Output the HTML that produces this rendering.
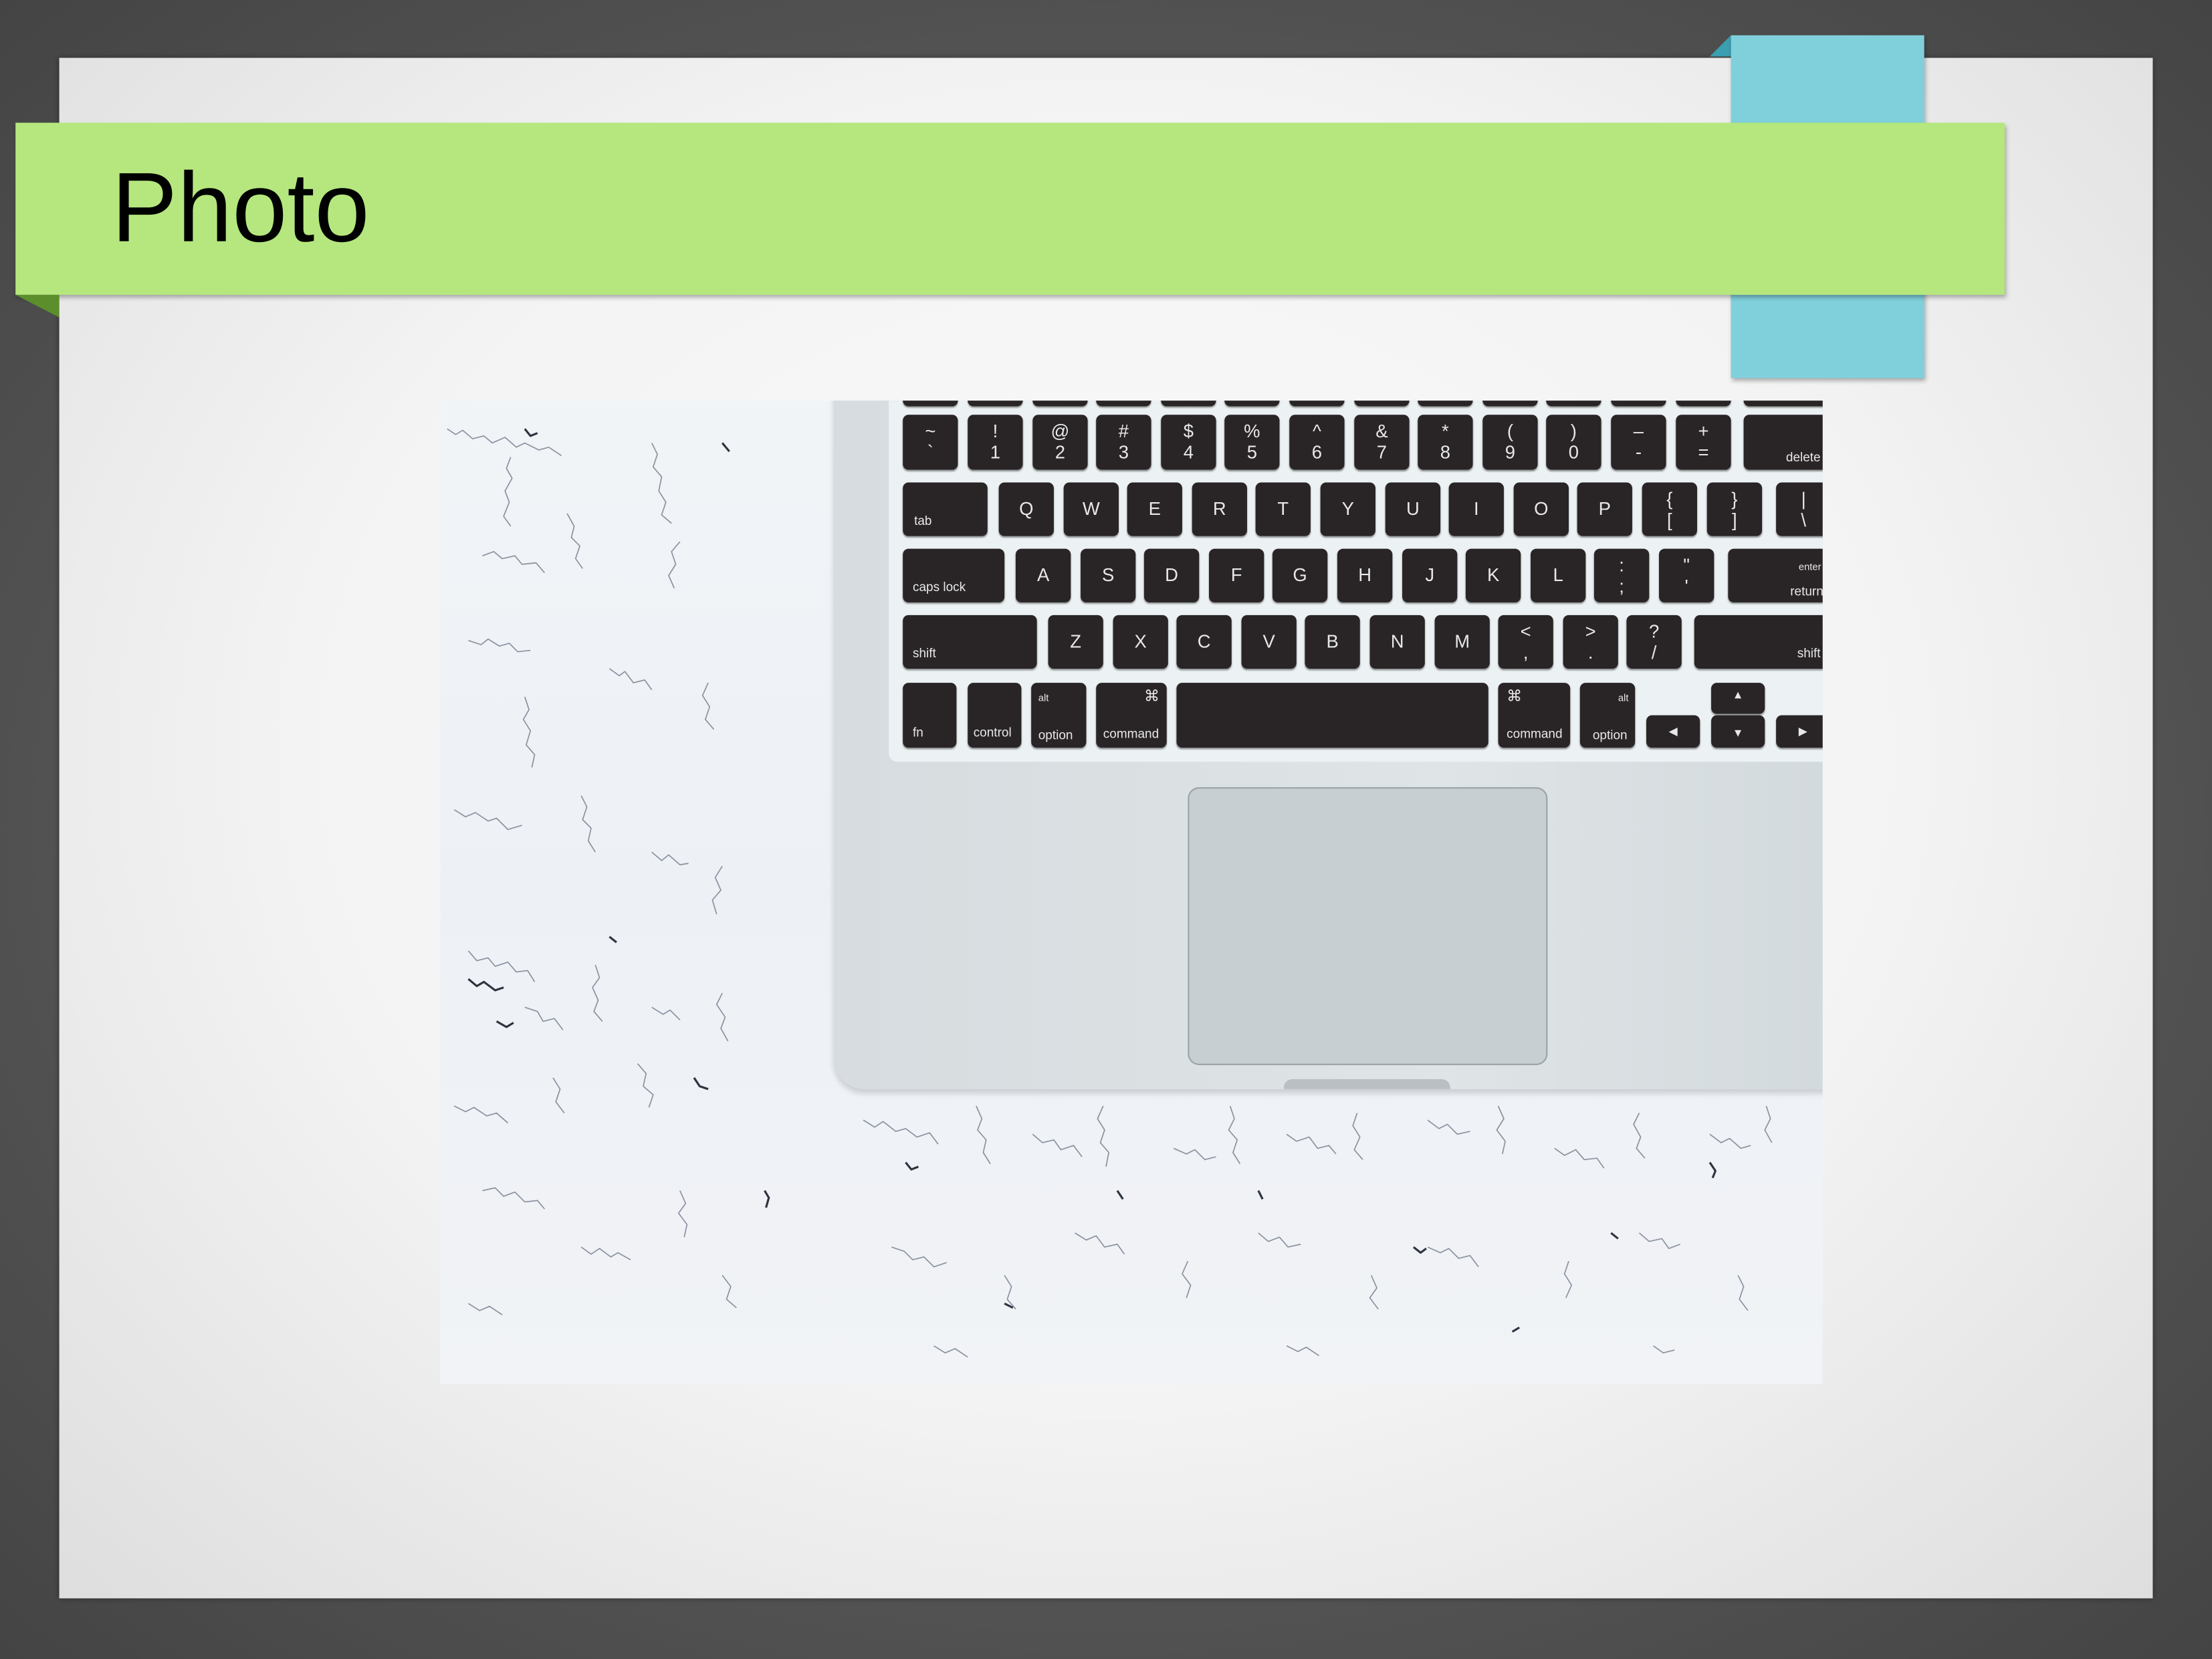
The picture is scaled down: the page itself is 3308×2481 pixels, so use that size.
<!DOCTYPE html>
<html><head><meta charset="utf-8">
<style>
html,body{margin:0;padding:0;width:3308px;height:2481px;overflow:hidden;background:#4a4a4a;}
#s{position:absolute;left:0;top:0;width:1568px;height:1176px;transform:scale(2.1097);transform-origin:0 0;
 background:radial-gradient(ellipse at 50% 50%,#6a6a6a 0%,#555 60%,#444 100%);font-family:"Liberation Sans",sans-serif;}
.slide{position:absolute;left:42px;top:41px;width:1484px;height:1092px;background:radial-gradient(ellipse at 50% 45%,#fbfbfb 0%,#f3f3f3 55%,#dedede 100%);box-shadow:0 0 4px rgba(0,0,0,.4);}
.blue{position:absolute;left:1227px;top:25px;width:137px;height:243px;background:#80d0dc;box-shadow:1px 2px 3px rgba(0,0,0,.3);}
.bfold{position:absolute;left:1212px;top:25px;width:0;height:0;border-right:15px solid #3a9fb0;border-top:15px solid transparent;}
.green{position:absolute;left:11px;top:87px;width:1410px;height:122px;background:#b5e77e;box-shadow:1px 2px 3px rgba(0,0,0,.3);}
.gfold{position:absolute;left:11px;top:209px;width:0;height:0;border-top:16px solid #5c8f2c;border-left:31px solid transparent;}
.title{position:absolute;left:79px;top:107px;font-size:70px;color:#000;line-height:80px;}
.photo{position:absolute;left:312px;top:284px;width:980px;height:697px;overflow:hidden;background:linear-gradient(180deg,#f1f4f7,#edf1f6 50%,#f1f3f6);}
.laptop{position:absolute;left:279px;top:-10px;width:720px;height:498px;background:linear-gradient(90deg,#d6dcdf,#dfe4e6 60%,#d2d9dc);border-radius:0 0 0 22px;box-shadow:0 3px 4px rgba(0,0,0,.15);}
.kbd{position:absolute;left:318px;top:0;width:680px;height:256px;background:#ecf1f3;border-radius:0 0 0 6px;}
.k{position:absolute;background:#292425;border-radius:4px;color:#e8e8e8;font-size:13px;text-align:center;box-shadow:0 1px 1px rgba(0,0,0,.4);}
.k.s{font-size:9px;text-align:left;}
.pad{position:absolute;left:530px;top:274px;width:253px;height:195px;background:#c8cfd2;border:1px solid #9aa2a5;border-radius:8px;}
.notch{position:absolute;left:598px;top:481px;width:118px;height:7px;background:#b9bfc2;border-radius:6px 6px 0 0;}
</style></head><body>
<div id="s">
<div class="slide"></div>
<div class="bfold"></div>
<div class="blue"></div>
<div class="green"></div>
<div class="gfold"></div>
<div class="title">Photo</div>
<div class="photo">
<svg width="980" height="697" style="position:absolute;left:0;top:0" fill="none" stroke="#8a92a0" stroke-width=".8" stroke-linejoin="round">
<path d="M5 20 l6 4 l5 -3 l7 6 l8 -2 l6 5 l9 -4 l8 7 l6 -3 l10 5 l7 -2 l9 6 M50 40 l-3 8 l4 7 l-5 9 l3 8 l-4 10 l5 7 M30 110 l8 -3 l6 5 l9 -2 l5 6 l10 -1 l6 7 M90 80 l5 9 l-2 8 l6 6 l-3 9 l5 7 M150 30 l4 8 l-3 9 l6 7 l-2 10 l5 8 l-3 9 l7 6 M170 100 l-6 7 l3 9 l-5 8 l4 9 M20 170 l9 3 l5 -4 l8 5 l7 -2 l6 6 l9 -1 M60 210 l3 9 l-4 7 l5 8 l-3 10 l6 7 l-2 9 M120 190 l7 5 l4 -3 l6 8 l8 -2 l5 7 M190 200 l-4 9 l5 8 l-3 9 l6 7 M10 290 l8 5 l7 -3 l9 6 l6 -2 l8 8 l10 -3 M100 280 l4 8 l-3 9 l6 6 l-2 9 l5 8 M150 320 l7 6 l5 -4 l8 7 l6 -1 M200 330 l-5 8 l4 9 l-6 7 l3 10 M20 390 l6 7 l8 -2 l5 6 l9 -3 l6 7 l8 -1 l5 8 M60 430 l9 3 l4 7 l8 -2 l6 8 M110 400 l3 9 l-5 7 l4 9 l-3 8 l6 7 M150 430 l8 5 l5 -3 l7 7 M200 420 l-4 8 l6 9 l-3 8 l5 9 M10 500 l8 4 l6 -3 l9 6 l7 -2 l8 7 M80 480 l5 8 l-3 9 l6 8 M140 470 l6 7 l-2 9 l7 6 l-3 9 M30 560 l9 -2 l6 6 l8 -3 l7 7 l9 -1 l5 6 M100 600 l7 5 l6 -4 l8 6 l5 -3 l9 5 M170 560 l4 9 l-5 7 l6 8 l-2 9 M20 640 l8 5 l7 -3 l9 6 M200 620 l6 8 l-3 9 l7 6"/>
<path d="M300 510 l8 5 l6 -4 l9 7 l7 -2 l8 6 l9 -3 l6 8 M380 500 l4 9 l-3 8 l6 7 l-2 9 l5 8 M420 520 l7 6 l8 -2 l5 7 l9 -3 l6 8 M470 500 l-4 9 l5 8 l-3 9 l6 7 l-2 10 M520 530 l9 4 l6 -3 l7 7 l8 -2 M560 500 l3 9 l-4 8 l6 7 l-3 9 l5 8 M600 520 l7 5 l9 -3 l6 8 l8 -2 l5 6 M650 505 l-3 9 l5 8 l-4 9 l6 7 M700 510 l8 6 l6 -3 l7 7 l9 -2 M750 500 l4 9 l-5 8 l6 8 l-2 9 M790 530 l7 5 l8 -4 l6 7 l9 -1 l5 7 M850 505 l-4 8 l5 9 l-3 8 l6 7 M900 520 l8 6 l6 -3 l8 7 l7 -2 M940 500 l3 9 l-4 8 l5 9 M320 600 l9 3 l6 6 l8 -2 l7 7 l9 -3 M400 620 l5 8 l-3 9 l6 7 M450 590 l8 5 l7 -3 l6 8 l9 -2 l5 7 M530 610 l-4 9 l6 8 l-3 9 M580 590 l7 6 l8 -3 l6 7 l9 -2 M660 620 l4 9 l-5 7 l6 8 M700 600 l9 4 l6 -3 l7 7 l8 -2 l6 8 M800 610 l-3 9 l5 8 l-4 9 M850 590 l7 6 l9 -2 l5 7 l8 -3 M920 620 l4 8 l-3 9 l6 8 M350 670 l8 5 l7 -3 l9 6 M600 670 l8 4 l6 -3 l9 6 M860 670 l7 5 l8 -2"/>
<path stroke="#2e3440" stroke-width="1.5" d="M20 410 l6 5 l5 -3 l8 6 l6 -2 M40 440 l7 4 l5 -3 M180 480 l4 6 l6 2 M230 560 l3 5 l-2 7 M60 20 l4 5 l5 -2 M200 30 l5 6 M330 540 l4 5 l5 -2 M580 560 l3 6 M690 600 l5 4 l4 -3 M900 540 l4 6 l-2 5 M400 640 l6 3 M760 660 l5 -3 M120 380 l5 4 M480 560 l4 6 M830 590 l5 4"/>
</svg>
<div class="laptop"></div>
<div class="kbd"></div>
<div class="pad"></div>
<div class="notch"></div>
<div style="position:absolute;left:0;top:0;width:980px;height:260px">
<div class="k" style="left:328px;top:-6px;width:39px;height:10px"></div><div class="k" style="left:374px;top:-6px;width:39px;height:10px"></div><div class="k" style="left:420px;top:-6px;width:39px;height:10px"></div><div class="k" style="left:465px;top:-6px;width:39px;height:10px"></div><div class="k" style="left:511px;top:-6px;width:39px;height:10px"></div><div class="k" style="left:556px;top:-6px;width:39px;height:10px"></div><div class="k" style="left:602px;top:-6px;width:39px;height:10px"></div><div class="k" style="left:648px;top:-6px;width:39px;height:10px"></div><div class="k" style="left:693px;top:-6px;width:39px;height:10px"></div><div class="k" style="left:739px;top:-6px;width:39px;height:10px"></div><div class="k" style="left:784px;top:-6px;width:39px;height:10px"></div><div class="k" style="left:830px;top:-6px;width:39px;height:10px"></div><div class="k" style="left:876px;top:-6px;width:39px;height:10px"></div><div class="k" style="left:924px;top:-6px;width:60px;height:10px"></div>
<div class="k" style="left:328px;top:10px;width:39px;height:39px;line-height:15px;padding-top:4px;box-sizing:border-box">~<br>`</div>
<div class="k" style="left:374px;top:10px;width:39px;height:39px;line-height:15px;padding-top:4px;box-sizing:border-box">!<br>1</div>
<div class="k" style="left:420px;top:10px;width:39px;height:39px;line-height:15px;padding-top:4px;box-sizing:border-box">@<br>2</div>
<div class="k" style="left:465px;top:10px;width:39px;height:39px;line-height:15px;padding-top:4px;box-sizing:border-box">#<br>3</div>
<div class="k" style="left:511px;top:10px;width:39px;height:39px;line-height:15px;padding-top:4px;box-sizing:border-box">$<br>4</div>
<div class="k" style="left:556px;top:10px;width:39px;height:39px;line-height:15px;padding-top:4px;box-sizing:border-box">%<br>5</div>
<div class="k" style="left:602px;top:10px;width:39px;height:39px;line-height:15px;padding-top:4px;box-sizing:border-box">^<br>6</div>
<div class="k" style="left:648px;top:10px;width:39px;height:39px;line-height:15px;padding-top:4px;box-sizing:border-box">&amp;<br>7</div>
<div class="k" style="left:693px;top:10px;width:39px;height:39px;line-height:15px;padding-top:4px;box-sizing:border-box">*<br>8</div>
<div class="k" style="left:739px;top:10px;width:39px;height:39px;line-height:15px;padding-top:4px;box-sizing:border-box">(<br>9</div>
<div class="k" style="left:784px;top:10px;width:39px;height:39px;line-height:15px;padding-top:4px;box-sizing:border-box">)<br>0</div>
<div class="k" style="left:830px;top:10px;width:39px;height:39px;line-height:15px;padding-top:4px;box-sizing:border-box">–<br>-</div>
<div class="k" style="left:876px;top:10px;width:39px;height:39px;line-height:15px;padding-top:4px;box-sizing:border-box">+<br>=</div>
<div class="k s" style="left:924px;top:10px;width:60px;height:39px;padding:25px 0 0 30px;box-sizing:border-box">delete</div>
<div class="k s" style="left:328px;top:58px;width:60px;height:38px;padding:22px 0 0 8px;box-sizing:border-box">tab</div>
<div class="k" style="left:396px;top:58px;width:39px;height:38px;line-height:38px">Q</div>
<div class="k" style="left:442px;top:58px;width:39px;height:38px;line-height:38px">W</div>
<div class="k" style="left:487px;top:58px;width:39px;height:38px;line-height:38px">E</div>
<div class="k" style="left:533px;top:58px;width:39px;height:38px;line-height:38px">R</div>
<div class="k" style="left:578px;top:58px;width:39px;height:38px;line-height:38px">T</div>
<div class="k" style="left:624px;top:58px;width:39px;height:38px;line-height:38px">Y</div>
<div class="k" style="left:670px;top:58px;width:39px;height:38px;line-height:38px">U</div>
<div class="k" style="left:715px;top:58px;width:39px;height:38px;line-height:38px">I</div>
<div class="k" style="left:761px;top:58px;width:39px;height:38px;line-height:38px">O</div>
<div class="k" style="left:806px;top:58px;width:39px;height:38px;line-height:38px">P</div>
<div class="k" style="left:852px;top:58px;width:39px;height:38px;line-height:15px;padding-top:4px;box-sizing:border-box">{<br>[</div>
<div class="k" style="left:898px;top:58px;width:39px;height:38px;line-height:15px;padding-top:4px;box-sizing:border-box">}<br>]</div>
<div class="k" style="left:947px;top:58px;width:39px;height:38px;line-height:15px;padding-top:4px;box-sizing:border-box">|<br>\</div>
<div class="k s" style="left:328px;top:105px;width:72px;height:38px;padding:22px 0 0 7px;box-sizing:border-box">caps lock</div>
<div class="k" style="left:408px;top:105px;width:39px;height:38px;line-height:38px">A</div>
<div class="k" style="left:454px;top:105px;width:39px;height:38px;line-height:38px">S</div>
<div class="k" style="left:499px;top:105px;width:39px;height:38px;line-height:38px">D</div>
<div class="k" style="left:545px;top:105px;width:39px;height:38px;line-height:38px">F</div>
<div class="k" style="left:590px;top:105px;width:39px;height:38px;line-height:38px">G</div>
<div class="k" style="left:636px;top:105px;width:39px;height:38px;line-height:38px">H</div>
<div class="k" style="left:682px;top:105px;width:39px;height:38px;line-height:38px">J</div>
<div class="k" style="left:727px;top:105px;width:39px;height:38px;line-height:38px">K</div>
<div class="k" style="left:773px;top:105px;width:39px;height:38px;line-height:38px">L</div>
<div class="k" style="left:818px;top:105px;width:39px;height:38px;line-height:15px;padding-top:4px;box-sizing:border-box">:<br>;</div>
<div class="k" style="left:864px;top:105px;width:39px;height:38px;line-height:15px;padding-top:4px;box-sizing:border-box">"<br>'</div>
<div class="k s" style="left:913px;top:105px;width:70px;height:38px;padding:5px 0 0 50px;box-sizing:border-box;font-size:7px;line-height:17px">enter<br><span style="font-size:9px;margin-left:-6px">return</span></div>
<div class="k s" style="left:328px;top:152px;width:95px;height:38px;padding:22px 0 0 7px;box-sizing:border-box">shift</div>
<div class="k" style="left:431px;top:152px;width:39px;height:38px;line-height:38px">Z</div>
<div class="k" style="left:477px;top:152px;width:39px;height:38px;line-height:38px">X</div>
<div class="k" style="left:522px;top:152px;width:39px;height:38px;line-height:38px">C</div>
<div class="k" style="left:568px;top:152px;width:39px;height:38px;line-height:38px">V</div>
<div class="k" style="left:613px;top:152px;width:39px;height:38px;line-height:38px">B</div>
<div class="k" style="left:659px;top:152px;width:39px;height:38px;line-height:38px">N</div>
<div class="k" style="left:705px;top:152px;width:39px;height:38px;line-height:38px">M</div>
<div class="k" style="left:750px;top:152px;width:39px;height:38px;line-height:15px;padding-top:4px;box-sizing:border-box">&lt;<br>,</div>
<div class="k" style="left:796px;top:152px;width:39px;height:38px;line-height:15px;padding-top:4px;box-sizing:border-box">&gt;<br>.</div>
<div class="k" style="left:841px;top:152px;width:39px;height:38px;line-height:15px;padding-top:4px;box-sizing:border-box">?<br>/</div>
<div class="k s" style="left:889px;top:152px;width:95px;height:38px;padding:22px 0 0 73px;box-sizing:border-box">shift</div>
<div class="k s" style="left:328px;top:200px;width:38px;height:46px;padding:30px 0 0 7px;box-sizing:border-box">fn</div>
<div class="k s" style="left:374px;top:200px;width:38px;height:46px;padding:30px 0 0 4px;box-sizing:border-box">control</div>
<div class="k s" style="left:419px;top:200px;width:39px;height:46px;padding:4px 0 0 5px;box-sizing:border-box;line-height:13px"><span style="font-size:7px">alt</span><br><br>option</div>
<div class="k s" style="left:465px;top:200px;width:50px;height:46px;padding:4px 0 0 5px;box-sizing:border-box;line-height:13px"><span style="margin-left:29px;font-size:11px">⌘</span><br><br>command</div>
<div class="k" style="left:522px;top:200px;width:221px;height:46px"></div>
<div class="k s" style="left:750px;top:200px;width:51px;height:46px;padding:4px 0 0 6px;box-sizing:border-box;line-height:13px"><span style="font-size:11px">⌘</span><br><br>command</div>
<div class="k s" style="left:808px;top:200px;width:39px;height:46px;padding:4px 0 0 9px;box-sizing:border-box;line-height:13px"><span style="margin-left:18px;font-size:7px">alt</span><br><br>option</div>
<div class="k" style="left:855px;top:223px;width:38px;height:23px;line-height:23px;font-size:8px">◀</div>
<div class="k" style="left:901px;top:200px;width:38px;height:22px;line-height:18px;font-size:8px">▲</div>
<div class="k" style="left:901px;top:223px;width:38px;height:23px;line-height:26px;font-size:8px">▼</div>
<div class="k" style="left:947px;top:223px;width:38px;height:23px;line-height:23px;font-size:8px">▶</div>
</div>
</div>
</div>
</body></html>
